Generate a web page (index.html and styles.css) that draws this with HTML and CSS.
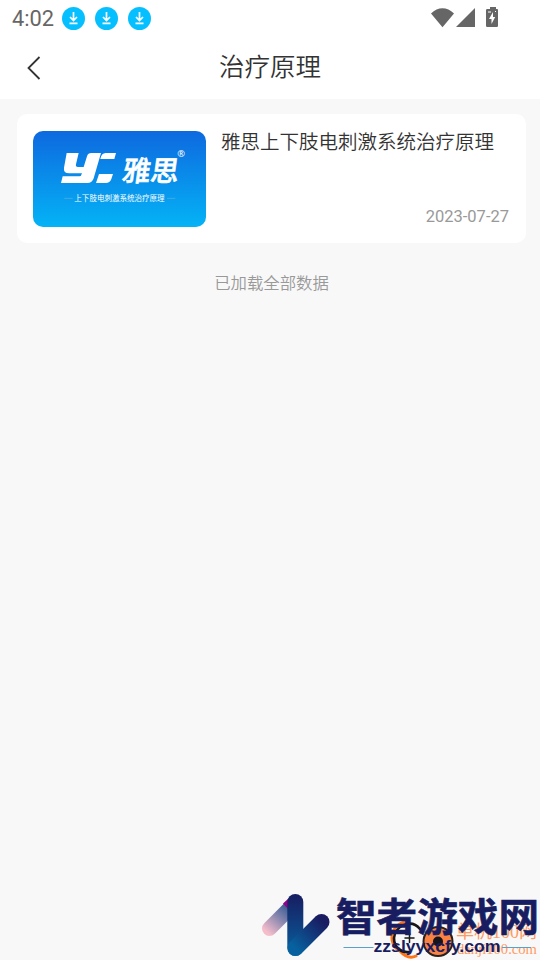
FILE: index.html
```html
<!DOCTYPE html>
<html lang="zh-CN">
<head>
<meta charset="utf-8">
<title>治疗原理</title>
<link rel="stylesheet" href="styles.css">
</head>
<body>
<header class="top">
  <div class="status">
    <span class="clock">4:02</span>
    <div class="downloads">
      <svg class="download" viewBox="0 0 23 23"><circle cx="11.5" cy="11.5" r="11.5"/><path d="M11.5 5v8M8 10l3.5 3.5L15 10M7.5 16.3h8"/></svg>
      <svg class="download" viewBox="0 0 23 23"><circle cx="11.5" cy="11.5" r="11.5"/><path d="M11.5 5v8M8 10l3.5 3.5L15 10M7.5 16.3h8"/></svg>
      <svg class="download" viewBox="0 0 23 23"><circle cx="11.5" cy="11.5" r="11.5"/><path d="M11.5 5v8M8 10l3.5 3.5L15 10M7.5 16.3h8"/></svg>
    </div>
    <svg class="signals" viewBox="0 0 70 24">
      <path d="M1 7.600C8 .6 17 .6 24 7.600L12.500 21.200ZM45 2v19H26ZM58 3h2V1h6v2h1.200Q68 3 68 4.200V19.800Q68 21 66.800 21H57.200Q56 21 56 19.800V4.200Q56 3 57.200 3Z"/>
      <path class="bolt" d="M63 6v5h2.200L61.500 18v-5h-2.500ZM58 5.500h3v1h-3ZM65 5h1v1h-1Z"/>
    </svg>
  </div>
  <div class="nav">
    <svg class="back" viewBox="0 0 14 24"><path d="M12.500 1L1.500 12l11 11"/></svg>
    <h1>治疗原理</h1>
  </div>
</header>
<main>
  <article class="card">
    <svg class="banner" viewBox="39 33 519 288">
      <defs><linearGradient id="sky" x1="0" y1="0" x2="0" y2="1"><stop offset="0" stop-color="#0e69df"/><stop offset="1" stop-color="#04b3f6"/></linearGradient></defs>
      <path fill="url(#sky)" d="M39 33h519v288H39z"/>
      <g fill="#fff">
        <path d="M140 99H176L168 133Q166 141 174 141H191L201 109Q204 99 214 99H243L221 175Q217 189 202 189H123L128 169H178Q184 169 186 160H148Q129 160 132 143Z"/>
        <path d="M257 99H288L283 117H241Q244 99 257 99ZM237 162H279L274 177Q270 189 257 189H228Z"/>
        <text class="brand" transform="translate(304 183) skewX(-8)" textLength="169" lengthAdjust="spacingAndGlyphs">雅思</text>
        <text class="registered" x="472" y="110">®</text>
        <text class="slogan" x="163" y="244" textLength="271" lengthAdjust="spacingAndGlyphs">上下肢电刺激系统治疗原理</text>
      </g>
      <path d="M133 235h25M441 235h25" stroke="#6aaed8" stroke-width="2"/>
    </svg>
    <div class="info">
      <h2>雅思上下肢电刺激系统治疗原理</h2>
      <time>2023-07-27</time>
    </div>
  </article>
  <p class="end">已加载全部数据</p>
</main>
<svg class="watermark" viewBox="250 885 290 75">
  <defs>
    <linearGradient id="pink" gradientUnits="userSpaceOnUse" x1="267" y1="932" x2="292" y2="904"><stop offset="0" stop-color="#f5bdcb"/><stop offset=".5" stop-color="#8585ae"/><stop offset="1" stop-color="#1f4f8c"/></linearGradient>
    <linearGradient id="stem" x1="0" y1="0" x2="0" y2="1"><stop offset="0" stop-color="#171d60"/><stop offset="1" stop-color="#07619f"/></linearGradient>
    <linearGradient id="arm" gradientUnits="userSpaceOnUse" x1="295" y1="948" x2="322" y2="921"><stop offset="0" stop-color="#07619f"/><stop offset="1" stop-color="#191c61"/></linearGradient>
  </defs>
  <path d="M269.500 928.500L295 903" stroke="url(#pink)" stroke-width="15" stroke-linecap="round"/>
  <path d="M283 903.500L288 899V909Z" fill="#94008b"/>
  <rect x="287.300" y="894" width="16" height="62" rx="8" fill="url(#stem)"/>
  <path d="M295.500 948L321.500 922" stroke="url(#arm)" stroke-width="16" stroke-linecap="round"/>
  <g fill="none" stroke-linecap="round">
    <path d="M407 921.500C390 924 387 944 400 951Q408 960 416 956" stroke="#ff7417" stroke-width="3"/>
    <path d="M420 929C411 918 395 926 394 938C394 948 402 953 409 952" stroke="#171719" stroke-width="2.600"/>
    <path d="M405 938h9M409.500 933.500v9" stroke="#171719" stroke-width="1.500"/>
  </g>
  <circle cx="438" cy="941.500" r="14.500" fill="#f98142" stroke="#28211f" stroke-width="2"/>
  <circle cx="438" cy="941.500" r="5" fill="#17151a"/>
  <g class="danji"><text x="456" y="938" font-size="18" textLength="81" lengthAdjust="spacingAndGlyphs">单机100网</text><text x="457" y="954" font-size="14" textLength="80" lengthAdjust="spacingAndGlyphs">danji100.com</text></g>
  <path d="M343.500 947.500h30M502 947.500h29" stroke="#5aa0c8" stroke-width="1.200"/>
  <text class="site" x="336" y="931" textLength="203" lengthAdjust="spacingAndGlyphs">智者游戏网</text>
  <text class="address" x="373.500" y="952" textLength="127" lengthAdjust="spacingAndGlyphs">zzslyyxcfy.com</text>
</svg>
</body>
</html>
```
FILE: styles.css
```css
* { box-sizing: border-box; }
body {
  position: relative;
  height: 960px;
  margin: 0;
  overflow: hidden;
  background: #f8f8f8;
  color: #333;
  font-family: Roboto, "Noto Sans CJK SC", sans-serif;
}
svg { display: block; }
h1, h2, p { margin: 0; font-weight: 350; }
.top { height: 99px; background: #fff; }
.status { display: flex; height: 36px; padding: 0 40px 0 12px; }
.clock {
  width: 50px;
  color: #666;
  font-size: 21.800px;
  line-height: 38px;
}
.downloads { display: flex; gap: 10px; padding-top: 7px; }
.download { width: 23px; height: 23px; }
.download circle { fill: #05bfff; }
.download path { fill: none; stroke: #fff; stroke-width: 1.700; }
.signals { width: 70px; height: 24px; margin: 6px 0 0 auto; fill: #666; }
.bolt { fill: #fff; }
.nav {
  display: grid;
  grid-template-columns: 60px 1fr 60px;
  align-items: center;
  height: 63px;
}
.back { width: 14px; height: 24px; margin-left: 27px; fill: none; stroke: #333; stroke-width: 1.800; }
h1 { padding-bottom: 2px; text-align: center; font-size: 25.500px; line-height: 40px; }
main { padding: 15px 14px 0 17px; }
.card {
  display: flex;
  gap: 15px;
  height: 129px;
  padding: 17px 17px 15px 16px;
  border-radius: 10px;
  background: #fff;
}
.banner { flex: none; width: 173px; height: 96px; border-radius: 10px; }
.brand { font: 500 84px "Noto Sans CJK SC", sans-serif; stroke: #fff; stroke-width: 2; }
.registered { font: 28px "Noto Sans", sans-serif; }
.slogan { font: 23px "Noto Sans CJK SC", sans-serif; }
.info { display: flex; flex: 1; flex-direction: column; justify-content: space-between; }
h2 { padding-top: 1px; font-size: 19.500px; line-height: 22px; white-space: nowrap; }
time { align-self: flex-end; color: #999; font-size: 16.500px; line-height: 22px; }
.end { margin-top: 29px; text-align: center; color: #999; font-size: 16.400px; line-height: 24px; }
.watermark { position: absolute; right: 0; bottom: 0; width: 290px; height: 75px; }
.site { fill: #171d60; stroke: #171d60; stroke-width: .6; font: 700 39px "Noto Sans CJK SC", sans-serif; }
.address { fill: #171d60; font: 700 16px "Liberation Sans", sans-serif; }
.danji { fill: #ff9a62; font-family: "Liberation Serif", "Noto Sans CJK SC", serif; }
```
